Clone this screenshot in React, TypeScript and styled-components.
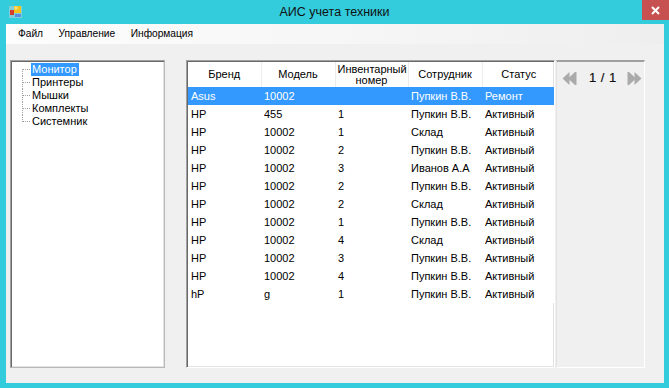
import React from 'react';
import styled, { createGlobalStyle } from 'styled-components';

const colors = {
  frame: '#33ccdc',
  face: '#f0f0f0',
  select: '#3399ff',
  close: '#c75050',
  dark: '#696969',
  shadow: '#a0a0a0',
  light: '#e3e3e3',
  arrow: '#aaaaaa',
};

const GlobalStyle = createGlobalStyle`
  html, body {
    margin: 0;
    padding: 0;
    background: ${colors.frame};
  }
  * {
    box-sizing: border-box;
  }
`;

const Window = styled.div`
  width: 669px;
  height: 388px;
  display: flex;
  flex-direction: column;
  background: ${colors.frame};
  font-family: 'Liberation Sans', Arial, sans-serif;
  font-size: 11px;
  color: #000;
`;

const TitleBar = styled.div`
  height: 24px;
  display: grid;
  grid-template-columns: 1fr auto 1fr;
  align-items: start;
`;

const AppIcon = styled.div`
  padding: 4px 0 0 8px;
  height: 20px;
`;

const Title = styled.div`
  font-family: 'Liberation Sans', Arial, sans-serif;
  font-size: 12.5px;
  line-height: 24px;
  color: #111;
`;

const CloseButton = styled.div`
  justify-self: end;
  width: 27px;
  height: 20px;
  background: ${colors.close};
  display: flex;
  align-items: center;
  justify-content: center;
`;

const Client = styled.div`
  flex: 1;
  margin: 0 5px 5px 6px;
  background: ${colors.face};
  display: flex;
  flex-direction: column;
`;

const MenuBar = styled.div`
  height: 20px;
  display: flex;
  align-items: center;
  padding-left: 4px;
  background: linear-gradient(to right, #fdfdfd, #f5f5f5 60%, #eeeeee);
  font-size: 10.2px;
`;

const MenuItem = styled.div`
  padding: 0 7.5px 0 8px;
  line-height: 20px;
`;

const Body = styled.div`
  flex: 1;
  display: flex;
  padding: 16px 19px 15px 4px;
`;

const TreePanel = styled.div`
  width: 155px;
  background: #fff;
  border-top: 1px solid ${colors.shadow};
  border-left: 1px solid ${colors.shadow};
  border-right: 1px solid #b8b8b8;
  border-bottom: 1px solid #b8b8b8;
  box-shadow: inset 1px 1px 0 ${colors.dark}, inset -1px -1px 0 ${colors.light};
  padding: 2px 0 0 2px;
`;

const TreeList = styled.ul`
  list-style: none;
  margin: 0;
  padding: 0 0 0 9px;
`;

const TreeItem = styled.li<{ $first?: boolean; $last?: boolean }>`
  position: relative;
  height: 13px;
  line-height: 13px;
  padding-left: 9px;

  &::before {
    content: '';
    position: absolute;
    left: 0;
    top: ${(p) => (p.$first ? '6px' : '0')};
    bottom: ${(p) => (p.$last ? '6px' : '0')};
    border-left: 1px dotted ${colors.shadow};
  }

  &::after {
    content: '';
    position: absolute;
    left: 1px;
    width: 7px;
    top: 6px;
    border-top: 1px dotted ${colors.shadow};
  }
`;

const NodeLabel = styled.span<{ $selected?: boolean }>`
  display: inline-block;
  padding: 0 2px 0 1px;
  background: ${(p) => (p.$selected ? colors.select : 'transparent')};
  color: ${(p) => (p.$selected ? '#fff' : '#000')};
`;

const GridPanel = styled.div`
  width: 369px;
  margin-left: 21px;
  background: #fff;
  border-top: 1px solid ${colors.shadow};
  border-left: 1px solid ${colors.shadow};
  border-right: 1px solid #fff;
  border-bottom: 1px solid #fff;
  box-shadow: inset 1px 1px 0 ${colors.dark}, inset -1px -1px 0 ${colors.light};
  padding: 1px 1px 0 1px;
  overflow: hidden;
`;

const Table = styled.table`
  width: 367px;
  border-collapse: collapse;
  table-layout: fixed;
`;

const HeadCell = styled.th`
  height: 25px;
  padding: 0 2px;
  font-weight: normal;
  text-align: center;
  line-height: 11px;
  border-right: 1px solid #ececec;
  vertical-align: middle;
  &:last-child {
    border-right: none;
  }
`;

const Row = styled.tr<{ $selected?: boolean }>`
  height: 18px;
  background: ${(p) => (p.$selected ? colors.select : '#fff')};
  color: ${(p) => (p.$selected ? '#fff' : '#000')};
`;

const Cell = styled.td`
  padding: 0 0 0 3px;
  white-space: nowrap;
  overflow: hidden;
`;

const PagerPanel = styled.div`
  width: 89px;
  margin-left: 1px;
  border-top: 2px solid ${colors.shadow};
  border-left: 1px solid ${colors.light};
  border-right: 1px solid #fff;
  border-bottom: 1px solid #fff;
  display: flex;
  align-items: flex-start;
  padding: 8px 0 0 5px;
`;

const PagerRow = styled.div`
  display: flex;
  align-items: center;
`;

const PageText = styled.span`
  font-size: 13px;
  line-height: 16px;
  color: #111;
  margin: 0 10px 0 12px;
  letter-spacing: 0.5px;
  -webkit-text-stroke: 0.2px #111;
`;

const columns = [
  { title: 'Бренд', width: 73 },
  { title: 'Модель', width: 74 },
  { title: 'Инвентарный номер', width: 73 },
  { title: 'Сотрудник', width: 74 },
  { title: 'Статус', width: 73 },
];

const rows: string[][] = [
  ['Asus', '10002', '', 'Пупкин В.В.', 'Ремонт'],
  ['HP', '455', '1', 'Пупкин В.В.', 'Активный'],
  ['HP', '10002', '1', 'Склад', 'Активный'],
  ['HP', '10002', '2', 'Пупкин В.В.', 'Активный'],
  ['HP', '10002', '3', 'Иванов А.А', 'Активный'],
  ['HP', '10002', '2', 'Пупкин В.В.', 'Активный'],
  ['HP', '10002', '2', 'Склад', 'Активный'],
  ['HP', '10002', '1', 'Пупкин В.В.', 'Активный'],
  ['HP', '10002', '4', 'Склад', 'Активный'],
  ['HP', '10002', '3', 'Пупкин В.В.', 'Активный'],
  ['HP', '10002', '4', 'Пупкин В.В.', 'Активный'],
  ['hP', 'g', '1', 'Пупкин В.В.', 'Активный'],
];

const treeNodes = ['Монитор', 'Принтеры', 'Мышки', 'Комплекты', 'Системник'];

// double triangle pager arrow
const PagerArrow = ({ dir }: { dir: 'left' | 'right' }) => (
  <svg width="15" height="15" viewBox="0 0 15 15">
    <g transform={dir === 'right' ? 'translate(15 0) scale(-1 1)' : undefined} fill={colors.arrow}>
      <polygon points="0.5,7.5 7.5,1 7.5,14" />
      <polygon points="6,7.5 13,1 13,14" />
      <rect x="13" y="1" width="1.5" height="13" />
    </g>
  </svg>
);

const WinIcon = () => (
  <svg width="16" height="16" viewBox="0 0 16 16">
    <rect x="1" y="2" width="13" height="12" fill="#7ecfd9" />
    <rect x="6" y="2" width="7" height="7" fill="#f4c21c" />
    <rect x="6.5" y="2.5" width="3" height="3" fill="#f9e07a" />
    <rect x="2" y="6" width="4" height="5" fill="#d63c2b" />
    <rect x="7" y="10" width="6" height="3" fill="#5b8fe0" />
  </svg>
);

const App = () => {
  return (
    <Window>
      <GlobalStyle />
      <TitleBar>
        <AppIcon>
          <WinIcon />
        </AppIcon>
        <Title>АИС учета техники</Title>
        <CloseButton>
          <svg width="9" height="9" viewBox="0 0 9 9">
            <path d="M1 1 L8 8 M8 1 L1 8" stroke="#fff" strokeWidth="2" />
          </svg>
        </CloseButton>
      </TitleBar>
      <Client>
        <MenuBar>
          <MenuItem>Файл</MenuItem>
          <MenuItem>Управление</MenuItem>
          <MenuItem>Информация</MenuItem>
        </MenuBar>
        <Body>
          <TreePanel>
            <TreeList>
              {treeNodes.map((name, i) => (
                <TreeItem key={name} $first={i === 0} $last={i === treeNodes.length - 1}>
                  <NodeLabel $selected={i === 0}>{name}</NodeLabel>
                </TreeItem>
              ))}
            </TreeList>
          </TreePanel>
          <GridPanel>
            <Table>
              <colgroup>
                {columns.map((c) => (
                  <col key={c.title} style={{ width: c.width }} />
                ))}
              </colgroup>
              <thead>
                <tr>
                  {columns.map((c) => (
                    <HeadCell key={c.title}>{c.title}</HeadCell>
                  ))}
                </tr>
              </thead>
              <tbody>
                {rows.map((r, i) => (
                  <Row key={i} $selected={i === 0}>
                    {r.map((v, j) => (
                      <Cell key={j}>{v}</Cell>
                    ))}
                  </Row>
                ))}
              </tbody>
            </Table>
          </GridPanel>
          <PagerPanel>
            <PagerRow>
              <PagerArrow dir="left" />
              <PageText>1 / 1</PageText>
              <PagerArrow dir="right" />
            </PagerRow>
          </PagerPanel>
        </Body>
      </Client>
    </Window>
  );
};

export default App;
